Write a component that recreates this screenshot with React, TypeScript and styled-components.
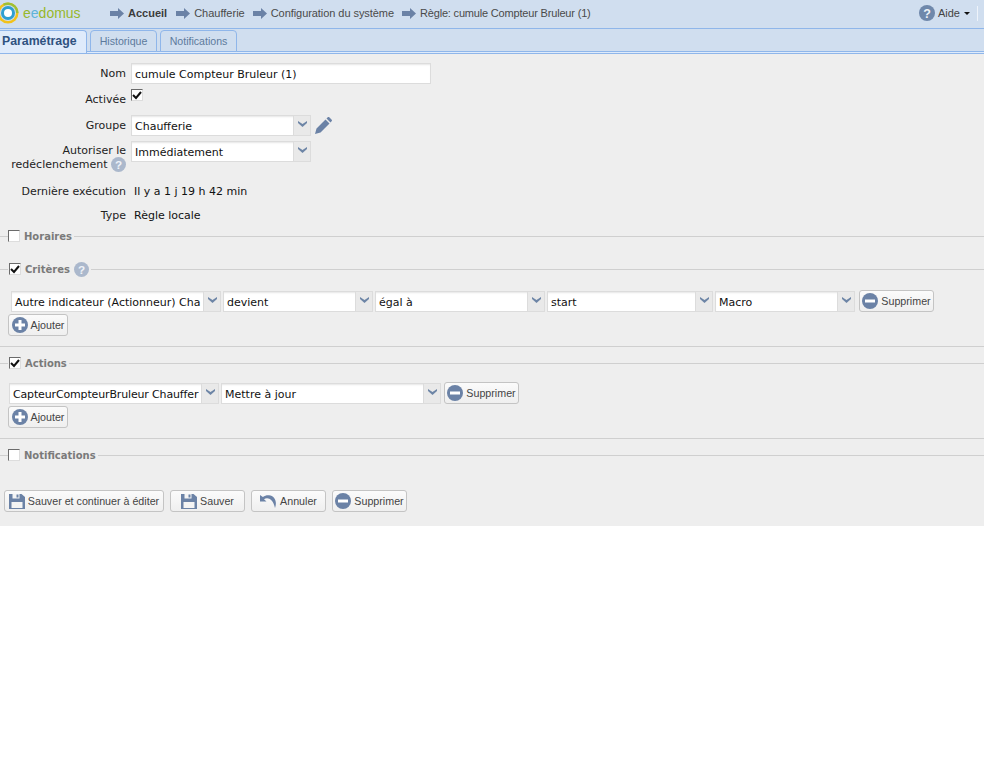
import React from 'react';
import styled, { createGlobalStyle } from 'styled-components';

const GlobalStyle = createGlobalStyle`
  html, body {
    margin: 0;
    padding: 0;
    background: #fff;
    font-family: "DejaVu Sans", Tahoma, sans-serif;
  }
`;

const Page = styled.div`
  width: 984px;
  height: 772px;
  overflow: hidden;
  background: #fff;
`;

const TopBar = styled.div`
  display: flex;
  align-items: center;
  height: 26px;
  padding-bottom: 2px;
  background: #d0deef;
  border-bottom: 1px solid #8fb6ea;
  font-family: "Liberation Sans", Arial, sans-serif;
  font-size: 11px;
  color: #444;
`;

const Logo = styled.div`
  display: flex;
  align-items: center;
  width: 110px;
  flex: none;
  font-size: 14px;
  color: #97b82c;
  svg {
    margin-right: 4px;
    flex: none;
  }
`;

const LogoAccent = styled.span`
  color: #5fb4d8;
`;

const Crumb = styled.div<{ $bold?: boolean; $spacing?: number }>`
  display: flex;
  align-items: center;
  gap: 4px;
  margin-right: ${({ $bold }) => ($bold ? 9 : 8)}px;
  font-weight: ${({ $bold }) => ($bold ? 700 : 400)};
  color: ${({ $bold }) => ($bold ? '#3c3c3c' : '#4a4a4a')};
  letter-spacing: ${({ $spacing }) => $spacing ?? 0}px;
  white-space: nowrap;
`;

const Help = styled.div`
  margin-right: 7px;
  display: flex;
  align-items: center;
  gap: 3px;
  color: #444;
`;

const Caret = styled.span`
  width: 0;
  height: 0;
  border-left: 3px solid transparent;
  border-right: 3px solid transparent;
  border-top: 3px solid #111;
  margin-left: 1px;
`;

const TabBar = styled.div`
  display: flex;
  align-items: flex-end;
  gap: 3px;
  height: 21px;
  padding-top: 1px;
  background: #d0deef;
  border-bottom: 1px solid #8fb6ea;
  font-family: "Liberation Sans", Arial, sans-serif;
  font-size: 10.6px;
`;

const Tab = styled.div<{ $active?: boolean; $width: number }>`
  box-sizing: border-box;
  width: ${({ $width }) => $width}px;
  height: ${({ $active }) => ($active ? 23 : 22)}px;
  margin-bottom: ${({ $active }) => ($active ? -2 : -1)}px;
  padding-left: ${({ $active }) => ($active ? 2 : 0)}px;
  line-height: 21px;
  text-align: ${({ $active }) => ($active ? 'left' : 'center')};
  border: 1px solid #8fb6ea;
  border-bottom: ${({ $active }) => ($active ? 'none' : '1px solid #8fb6ea')};
  border-left: ${({ $active }) => ($active ? 'none' : '1px solid #8fb6ea')};
  border-radius: ${({ $active }) => ($active ? '0 4px 0 0' : '4px 4px 0 0')};
  background: ${({ $active }) => ($active ? '#dfebfb' : '#d0deef')};
  color: ${({ $active }) => ($active ? '#2f5280' : '#5d7a9c')};
  font-size: ${({ $active }) => ($active ? 12.3 : 10.6)}px;
  font-weight: ${({ $active }) => ($active ? 700 : 400)};
`;

const TabGap = styled.div`
  height: 1px;
  background: #dfebfb;
  border-bottom: 1px solid #8fb6ea;
`;

const Content = styled.div`
  height: 472px;
  box-sizing: border-box;
  background: #eeeeee;
  padding-top: 9px;
  font-size: 11px;
  color: #111;
`;

const FormRow = styled.div<{ $height: number }>`
  display: flex;
  height: ${({ $height }) => $height}px;
`;

const Label = styled.div<{ $top?: number }>`
  box-sizing: border-box;
  width: 126px;
  flex: none;
  padding-top: ${({ $top }) => $top ?? 4}px;
  margin-right: 5px;
  text-align: right;
  color: #222;
  line-height: 14px;
  white-space: nowrap;
  svg {
    vertical-align: middle;
    margin-top: -2px;
  }
`;

const Value = styled.div`
  padding-left: 3px;
  padding-top: 4px;
  line-height: 14px;
`;

const TextInput = styled.div<{ $width: number }>`
  box-sizing: border-box;
  width: ${({ $width }) => $width}px;
  height: 21px;
  padding-left: 3px;
  line-height: 22px;
  background: #fff;
  border: 1px solid #dcdcdc;
  box-shadow: inset 0 2px 2px -1px #e6e6e6;
  white-space: nowrap;
  overflow: hidden;
`;

const Select = styled.div<{ $width: number }>`
  display: flex;
  box-sizing: border-box;
  flex: none;
  width: ${({ $width }) => $width}px;
  height: 21px;
  background: #fff;
  border: 1px solid #dcdcdc;
  box-shadow: inset 0 2px 2px -1px #e6e6e6;
`;

const SelectText = styled.div<{ $spacing?: number }>`
  flex: 1;
  min-width: 0;
  padding-left: 3px;
  line-height: 22px;
  letter-spacing: ${({ $spacing }) => $spacing ?? 0}px;
  white-space: nowrap;
`;

const SelectArrow = styled.div`
  display: flex;
  justify-content: center;
  padding-top: 5px;
  box-sizing: border-box;
  width: 17px;
  flex: none;
  background: #e9e9e9;
  border-left: 1px solid #dcdcdc;
`;

const Check = styled.div<{ $shift?: boolean }>`
  box-sizing: border-box;
  width: 12px;
  height: 12px;
  flex: none;
  margin-left: ${({ $shift }) => ($shift ? 1 : 0)}px;
  background: #fff;
  border: 1px solid #6b6b6b;
  border-right-color: #ddd;
  border-bottom-color: #ddd;
  display: flex;
  align-items: center;
  justify-content: center;
`;

const PencilWrap = styled.div`
  margin: 2px 0 0 4px;
`;

const Section = styled.fieldset<{ $height: number; $closed?: boolean; $gap?: number }>`
  box-sizing: border-box;
  margin: 0 0 ${({ $gap }) => $gap ?? 0}px;
  height: ${({ $height }) => $height}px;
  padding: 0;
  min-width: 0;
  border: none;
  border-top: 1px solid #cfcfcf;
  border-bottom: ${({ $closed }) => ($closed ? 'none' : '1px solid #cfcfcf')};
`;

const Legend = styled.legend`
  display: flex;
  align-items: center;
  gap: 4px;
  margin-left: 8px;
  padding: 0 2px 0 0;
  height: 14px;
  font-family: "DejaVu Sans", Tahoma, sans-serif;
  font-size: 10px;
  font-weight: 700;
  color: #7a7a7a;
`;

const FieldRow = styled.div<{ $left: number; $top: number }>`
  display: flex;
  align-items: flex-start;
  gap: 2px;
  margin-left: ${({ $left }) => $left}px;
  padding-top: ${({ $top }) => $top}px;
`;

const Button = styled.div<{ $width: number; $left?: number; $up?: boolean }>`
  display: flex;
  align-items: center;
  justify-content: center;
  gap: 3px;
  box-sizing: border-box;
  flex: none;
  width: ${({ $width }) => $width}px;
  height: 22px;
  margin-left: ${({ $left }) => $left ?? 0}px;
  margin-top: ${({ $up }) => ($up ? -1 : 0)}px;
  background: linear-gradient(#fbfbfb, #efefef);
  border: 1px solid #c4c4c4;
  border-radius: 3px;
  font-family: "Liberation Sans", Arial, sans-serif;
  font-size: 10.7px;
  color: #444;
  white-space: nowrap;
`;

const AddRow = styled.div`
  margin: 2px 0 0 8px;
`;

const Footer = styled.div`
  display: flex;
  gap: 6px;
  margin: 0 0 0 4px;
`;

const Separator = styled.div`
  width: 1px;
  height: 15px;
  background: #eef3fa;
`;

const HelpGroup = styled.div`
  margin-left: auto;
  margin-right: 6px;
  display: flex;
  align-items: center;
`;

const BLUE = '#6b82a6';

const Arrow = () => (
  <svg width="14" height="11" viewBox="0 0 14 11">
    <path d="M0 3h8V0l6 5.500L8 11V8H0z" fill={BLUE} />
  </svg>
);

const HelpIcon = ({ size, color }: { size: number; color: string }) => (
  <svg width={size} height={size} viewBox="0 0 16 16">
    <circle cx="8" cy="8" r="8" fill={color} />
    <text x="8" y="12.500" textAnchor="middle" fontSize="12.500" fontWeight="700" fontFamily="Liberation Sans" fill="#eef2f8">
      ?
    </text>
  </svg>
);

const Chevron = () => (
  <svg width="9" height="6" viewBox="0 0 9 6">
    <path d="M0 0l4.500 3L9 0v2L4.500 6 0 2z" fill="#6d85a6" />
  </svg>
);

const RoundIcon = ({ plus }: { plus?: boolean }) => (
  <svg width="16" height="16" viewBox="0 0 16 16">
    <circle cx="8" cy="8" r="8" fill={BLUE} />
    <rect x="3" y="6.500" width="10" height="3" fill="#fff" />
    {plus && <rect x="6.500" y="3" width="3" height="10" fill="#fff" />}
  </svg>
);

const SaveIcon = () => (
  <svg width="16" height="16" viewBox="0 0 16 16">
    <path d="M0 1h12.500L16 4v12H0z" fill={BLUE} />
    <rect x="3.500" y="1" width="7" height="4.500" fill="#f4f4f4" />
    <rect x="7.500" y="1.500" width="2" height="3" fill={BLUE} />
    <rect x="2.500" y="9" width="11" height="6" fill="#f4f4f4" />
  </svg>
);

const UndoIcon = () => (
  <svg width="17" height="14" viewBox="0 0 17 14">
    <path d="M0 1v6.500h6.500L4 5.200C7.500 3 13 4.500 15 14c2.500-7-.5-12-6-12.700C7 1 4.800 1.600 2.900 3z" fill={BLUE} />
  </svg>
);

const PencilIcon = () => (
  <svg width="17" height="17" viewBox="0 0 17 17">
    <path d="M0 17l1.500-5.500L10.500 2.500l4 4L5.500 15.500z M11.500 1.500 13 0c.5-.2 1 0 1.300.3l2.400 2.400c.3.400.4.900.1 1.300L15.500 5.500z" fill={BLUE} />
  </svg>
);

// ring runs off the left edge of the page in the original
const Logomark = () => (
  <svg width="19" height="24" viewBox="0 0 19 24">
    <circle cx="8" cy="12" r="10.500" fill="#f2c21a" />
    <path d="M18.500 12A10.500 10.500 0 0 0 3 2.800L8 12z" fill="#9dbf35" />
    <circle cx="8" cy="12" r="8" fill="#d0deef" />
    <circle cx="8" cy="12" r="7" fill="#2f9fd0" />
    <circle cx="8" cy="12" r="4" fill="#fff" />
  </svg>
);

const CheckMark = () => (
  <svg width="10" height="9" viewBox="0 0 10 9">
    <path d="M1 4l3 3 5-6" fill="none" stroke="#111" strokeWidth="2" />
  </svg>
);

const Dropdown = ({ width, text, spacing }: { width: number; text: string; spacing?: number }) => (
  <Select $width={width}>
    <SelectText $spacing={spacing}>{text}</SelectText>
    <SelectArrow>
      <Chevron />
    </SelectArrow>
  </Select>
);

const App: React.FC = () => (
  <Page>
    <GlobalStyle />
    <TopBar>
      <Logo>
        <Logomark />
        <span>
          e<LogoAccent>e</LogoAccent>domus
        </span>
      </Logo>
      <Crumb $bold>
        <Arrow />
        Accueil
      </Crumb>
      <Crumb>
        <Arrow />
        Chaufferie
      </Crumb>
      <Crumb $spacing={-0.06}>
        <Arrow />
        Configuration du système
      </Crumb>
      <Crumb $spacing={-0.18}>
        <Arrow />
        Règle: cumule Compteur Bruleur (1)
      </Crumb>
      <HelpGroup>
        <Help>
          <HelpIcon size={16} color="#6f88ab" />
          Aide
          <Caret />
        </Help>
        <Separator />
      </HelpGroup>
    </TopBar>
    <TabBar>
      <Tab $active $width={87}>Paramétrage</Tab>
      <Tab $width={67}>Historique</Tab>
      <Tab $width={77}>Notifications</Tab>
    </TabBar>
    <TabGap />
    <Content>
      <FormRow $height={26}>
        <Label>Nom</Label>
        <TextInput $width={300}>cumule Compteur Bruleur (1)</TextInput>
      </FormRow>
      <FormRow $height={26}>
        <Label>Activée</Label>
        <Check>
          <CheckMark />
        </Check>
      </FormRow>
      <FormRow $height={26}>
        <Label>Groupe</Label>
        <Dropdown width={180} text="Chaufferie" />
        <PencilWrap>
          <PencilIcon />
        </PencilWrap>
      </FormRow>
      <FormRow $height={40}>
        <Label $top={3}>
          Autoriser le
          <br />
          redéclenchement <HelpIcon size={15} color="#abb8cc" />
        </Label>
        <Dropdown width={180} text="Immédiatement" />
      </FormRow>
      <FormRow $height={24}>
        <Label>Dernière exécution</Label>
        <Value>Il y a 1 j 19 h 42 min</Value>
      </FormRow>
      <FormRow $height={24}>
        <Label>Type</Label>
        <Value>Règle locale</Value>
      </FormRow>
      <Section $height={33} $closed>
        <Legend>
          <Check />
          Horaires
        </Legend>
      </Section>
      <Section $height={85} $gap={9}>
        <Legend>
          <Check $shift>
            <CheckMark />
          </Check>
          Critères
          <HelpIcon size={15} color="#abb8cc" />
        </Legend>
        <FieldRow $left={11} $top={15}>
          <Dropdown width={210} text="Autre indicateur (Actionneur) Cha" />
          <Dropdown width={150} text="devient" />
          <Dropdown width={170} text="égal à" />
          <Dropdown width={166} text="start" />
          <Dropdown width={140} text="Macro" />
          <Button $width={75} $left={2} $up>
            <RoundIcon />
            Supprimer
          </Button>
        </FieldRow>
        <AddRow>
          <Button $width={60}>
            <RoundIcon plus />
            Ajouter
          </Button>
        </AddRow>
      </Section>
      <Section $height={83} $gap={9}>
        <Legend>
          <Check $shift>
            <CheckMark />
          </Check>
          Actions
        </Legend>
        <FieldRow $left={9} $top={13}>
          <Dropdown width={210} text="CapteurCompteurBruleur Chauffer" spacing={-0.15} />
          <Dropdown width={220} text="Mettre à jour" />
          <Button $width={75} $left={1} $up>
            <RoundIcon />
            Supprimer
          </Button>
        </FieldRow>
        <AddRow>
          <Button $width={60}>
            <RoundIcon plus />
            Ajouter
          </Button>
        </AddRow>
      </Section>
      <Section $height={42} $closed>
        <Legend>
          <Check />
          Notifications
        </Legend>
      </Section>
      <Footer>
        <Button $width={160}>
          <SaveIcon />
          Sauver et continuer à éditer
        </Button>
        <Button $width={75}>
          <SaveIcon />
          Sauver
        </Button>
        <Button $width={75}>
          <UndoIcon />
          Annuler
        </Button>
        <Button $width={75}>
          <RoundIcon />
          Supprimer
        </Button>
      </Footer>
    </Content>
  </Page>
);

export default App;
